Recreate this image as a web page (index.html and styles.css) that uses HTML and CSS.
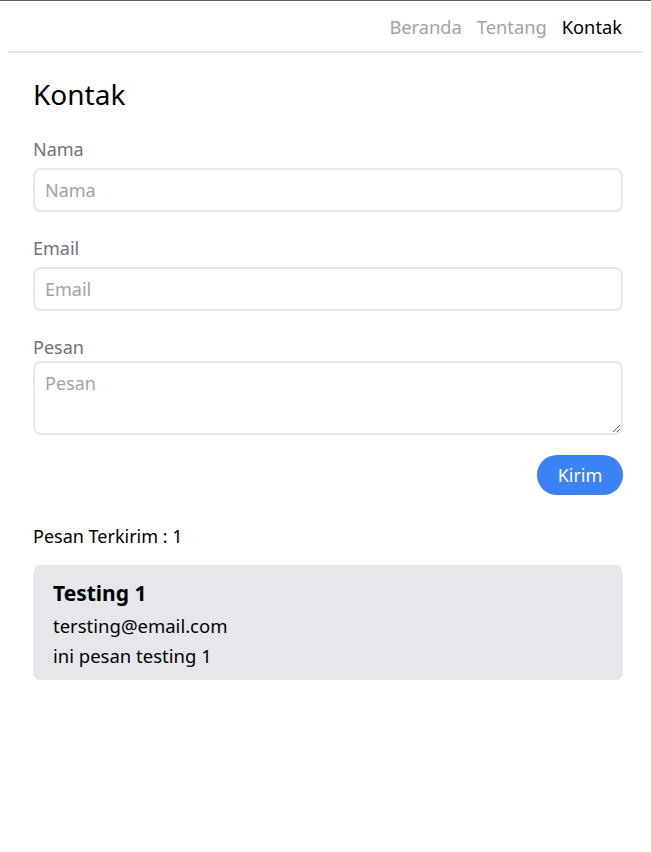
FILE: index.html
```html
<!DOCTYPE html>
<html lang="id">
<head>
<meta charset="utf-8">
<title>Kontak</title>
<link rel="stylesheet" href="styles.css">
</head>
<body>
<nav class="nav">
  <a class="nav-link" href="#">Beranda</a>
  <a class="nav-link" href="#">Tentang</a>
  <a class="nav-link active" href="#">Kontak</a>
</nav>
<main class="main">
  <h1 class="title">Kontak</h1>
  <form class="form">
    <div class="field">
      <label class="label">Nama</label>
      <input class="input" type="text" placeholder="Nama">
    </div>
    <div class="field">
      <label class="label">Email</label>
      <input class="input" type="text" placeholder="Email">
    </div>
    <div class="field field-last">
      <label class="label label-tight">Pesan</label>
      <textarea class="input textarea" placeholder="Pesan"></textarea>
    </div>
    <div class="actions">
      <button class="btn" type="button">Kirim</button>
    </div>
  </form>
  <p class="count">Pesan Terkirim : 1</p>
  <div class="card">
    <div class="card-title">Testing 1</div>
    <div class="card-line">tersting@email.com</div>
    <div class="card-line">ini pesan testing 1</div>
  </div>
</main>
</body>
</html>
```

FILE: styles.css
```css
html {
  border-top: 1px solid #5a5a5a;
}
body {
  margin: 0 8px 8px 8px;
  font-family: "Noto Sans", sans-serif;
  font-size: 18px;
  color: #111;
  background: #fff;
}
.nav {
  display: flex;
  justify-content: flex-end;
  gap: 15px;
  padding: 13px 21px 0 0;
  height: 37px;
  border-bottom: 2px solid #e5e7eb;
}
.nav-link {
  color: #9ca3af;
  text-decoration: none;
  line-height: 26px;
  font-size: 18.3px;
}
.nav-link.active {
  color: #000;
}
.main {
  padding: 0 20px 0 25px;
}
.title {
  margin: 22px 0 0 0;
  font-size: 28px;
  font-weight: 400;
  line-height: 38px;
  color: #000;
}
.form {
  margin-top: 23px;
}
.field {
  display: flex;
  flex-direction: column;
  margin-bottom: 23px;
}
.label {
  color: #6b7280;
  line-height: 26px;
  margin-bottom: 6px;
}
.label-tight {
  margin-bottom: 1px;
}
.input {
  box-sizing: border-box;
  height: 44px;
  border: 2px solid #e5e7eb;
  border-radius: 8px;
  padding: 0 10px;
  font-family: inherit;
  font-size: 18px;
  color: #111;
  outline: none;
}
.input::placeholder {
  color: #9ca3af;
}
.textarea {
  height: 74px;
  padding-top: 8px;
  resize: vertical;
}
.field-last {
  margin-bottom: 20px;
}
.actions {
  display: flex;
  justify-content: flex-end;
}
.btn {
  width: 86px;
  height: 40px;
  border: none;
  border-radius: 20px;
  background: #3b82f6;
  color: #fff;
  font-family: inherit;
  font-size: 18px;
}
.count {
  margin: 28px 0 0 0;
  line-height: 26px;
  color: #000;
}
.card {
  margin-top: 16px;
  background: #e5e7eb;
  border-radius: 8px;
  padding: 12px 20px 9px;
}
.card-title {
  font-weight: 700;
  font-size: 21px;
  line-height: 32px;
  margin-bottom: 2px;
  color: #000;
}
.card-line {
  line-height: 30px;
  color: #000;
  font-size: 18.5px;
}
```
